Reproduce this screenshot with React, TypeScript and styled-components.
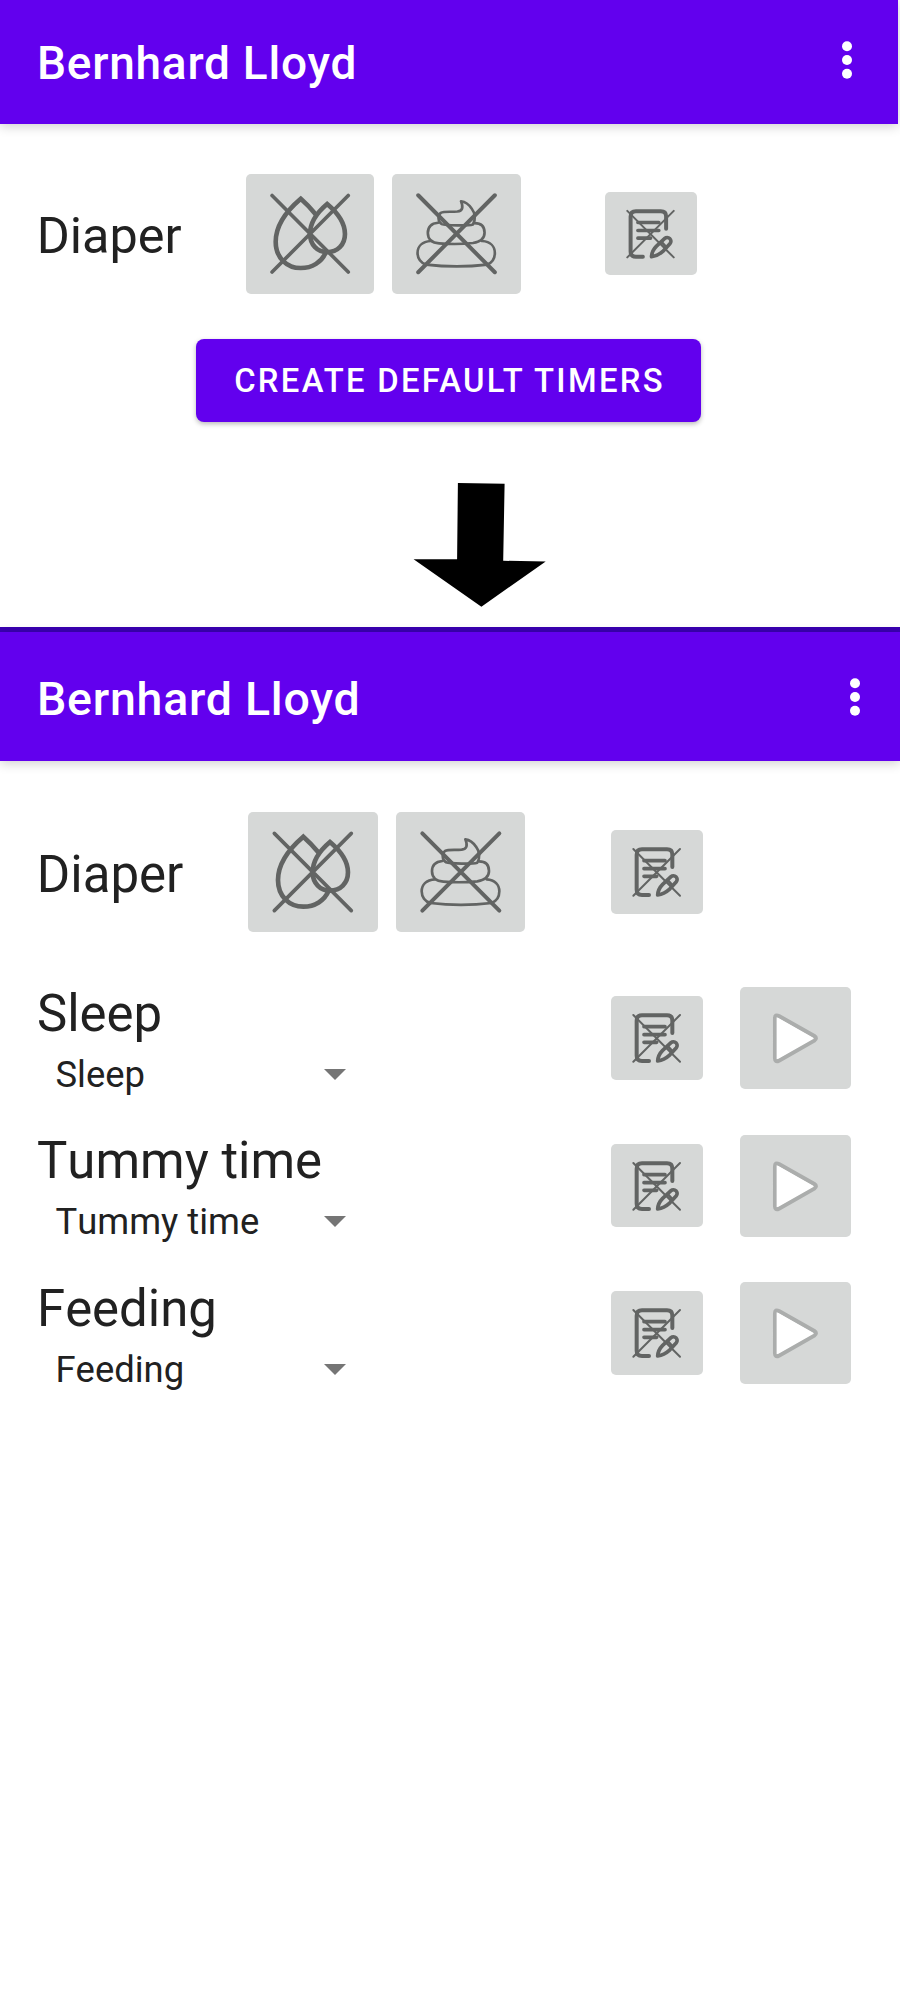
import React from 'react';
import styled, { createGlobalStyle } from 'styled-components';

const GlobalStyle = createGlobalStyle`
  * { box-sizing: border-box; }
  body {
    margin: 0;
    background: #fff;
    font-family: Roboto, 'Liberation Sans', sans-serif;
    color: #212121;
  }
  button { font-family: inherit; border: 0; padding: 0; margin: 0; }
  svg { display: block; }
`;

const Page = styled.main`
  width: 900px;
  height: 2000px;
  overflow: hidden;
`;

const Screen = styled.section<{ $width: number; $height?: number }>`
  width: ${p => p.$width}px;
  height: ${p => (p.$height ? `${p.$height}px` : 'auto')};
`;

const StatusStrip = styled.div`
  height: 5px;
  background: #3a00b2;
`;

const AppBar = styled.header<{ $height: number; $end: number }>`
  display: flex;
  align-items: center;
  justify-content: space-between;
  height: ${p => p.$height}px;
  padding: 0 ${p => p.$end}px 0 37px;
  background: #6200ee;
  box-shadow: 0 2px 11px rgba(0, 0, 0, 0.2);
`;

const Title = styled.h1<{ $size: number; $drop: number }>`
  margin: 0;
  padding-top: ${p => p.$drop}px;
  font-size: ${p => p.$size}px;
  font-weight: 500;
  letter-spacing: 0.75px;
  line-height: 60px;
  white-space: nowrap;
  color: #fff;
`;

const MenuButton = styled.button<{ $lift: number }>`
  width: 12px;
  height: 40px;
  background: none;
  margin-bottom: ${p => p.$lift}px;
`;

const DiaperRow = styled.div<{ $top: number; $height: number }>`
  display: flex;
  align-items: center;
  height: ${p => p.$height}px;
  margin-top: ${p => p.$top}px;
  padding-left: 36px;
`;

const DiaperLabel = styled.div<{ $width: number; $size: number }>`
  width: ${p => p.$width}px;
  padding: 5px 0 0 0.8px;
  font-size: ${p => p.$size}px;
  line-height: 60px;
`;

const Tile = styled.button<{ $w: number; $h: number; $before?: number }>`
  flex: none;
  width: ${p => p.$w}px;
  height: ${p => p.$h}px;
  margin-left: ${p => p.$before ?? 0}px;
  border-radius: 5px;
  background: #d6d8d7;
`;

const CreateButton = styled.button`
  display: block;
  width: 505px;
  height: 82.5px;
  margin: 45.5px 0 0 196px;
  padding: 1px 0 0 2px;
  border-radius: 8px;
  background: #6200ee;
  box-shadow: 0 2px 5px rgba(0, 0, 0, 0.28);
  color: #fff;
  font-size: 32.8px;
  font-weight: 500;
  letter-spacing: 2.3px;
  line-height: 40px;
  white-space: nowrap;
`;

const ArrowBox = styled.div`
  width: 133px;
  margin: 62px 0 0 413px;
`;

const TimerList = styled.div`
  display: flex;
  flex-direction: column;
  gap: 13.6px;
  margin-top: 39px;
`;

const TimerRow = styled.div`
  display: flex;
  align-items: center;
  height: 134px;
  padding-left: 37px;
`;

const TimerInfo = styled.div`
  width: 574px;
  padding-top: 12.4px;
`;

const TimerName = styled.div`
  font-size: 50.9px;
  font-kerning: none;
  line-height: 60px;
`;

const Spinner = styled.div`
  display: flex;
  align-items: center;
  justify-content: space-between;
  width: 308.6px;
  height: 61px;
  padding-left: 18.5px;
  font-size: 36.4px;
  font-kerning: none;
  line-height: 61px;
`;

const INK = '#626463';

const Dots = () => (
  <svg width="12" height="40" viewBox="0 0 12 40" fill="#fff">
    <circle cx="6" cy="6.3" r="5" />
    <circle cx="6" cy="20" r="5" />
    <circle cx="6" cy="33.8" r="5" />
  </svg>
);

const WetIcon = () => (
  <svg width="100%" height="100%" viewBox="25 36 388 360" fill="none" stroke={INK} strokeWidth="14" strokeLinecap="round">
    <path d="M104 100 335 332M335 100 104 332" strokeWidth="11" />
    <path d="M236 157Q214 130 191 110C150 145 115 190 115 240C115 290 150 320 191 320C225 320 255 302 267 272" />
    <path d="M271 126C240 152 219 185 219 217C219 250 242 272 271 272C302 272 325 250 325 217C325 185 302 152 271 126Z" />
  </svg>
);

const SolidIcon = () => (
  <svg width="100%" height="100%" viewBox="18 36 387 360" fill="none" stroke={INK} strokeWidth="8" strokeLinecap="round" strokeLinejoin="round">
    <path d="M97 100 328 332M328 100 97 332" strokeWidth="12" />
    <path d="M226 118Q238 146 215 149C195 151 175 148 165 153C155 160 156 180 168 187C180 192 250 192 262 188C270 175 270 155 258 140C250 128 240 120 226 118Z" />
    <path d="M157 183C135 185 126 198 126 214C126 232 138 244 160 245Q213 249 262 244C285 240 297 230 297 213C297 195 287 184 267 184" />
    <path d="M135 238C108 240 95 255 95 274C95 290 105 305 121 309Q213 320 305 309C320 303 328 290 328 274C328 255 315 240 290 238" />
  </svg>
);

const NotesIcon = () => (
  <svg width="100%" height="100%" viewBox="33 30 276 251" fill="none" stroke={INK} strokeWidth="12" strokeLinecap="round" strokeLinejoin="round">
    <path d="M100 87 240 227M240 87 100 227" strokeWidth="6" />
    <path d="M217 141V104Q217 88 201 88H126Q110 88 110 104V209Q110 225 126 225H147" />
    <path d="M132 122H195M132 146H195M132 169H170" strokeWidth="11" />
    <path d="M173 225Q174 207 188 193L213 170A11 11 0 0 1 229 185L207 209Q193 222 173 225Z" strokeWidth="11" />
    <path d="M203 180 218 197" strokeWidth="8" />
  </svg>
);

const PlayIcon = () => (
  <svg width="100%" height="100%" viewBox="450 51 332 306">
    <path d="M555 145Q555 132 567 138L673 198Q683 205 673 212L567 272Q555 278 555 265Z" fill="#fff" stroke="#abadac" strokeWidth="12" />
    <path d="M560 142 670 205 560 268Z" fill="#fff" />
  </svg>
);

const Caret = () => (
  <svg width="22" height="11" viewBox="0 0 22 11">
    <path d="M0 0H22L11 11Z" fill="#757575" />
  </svg>
);

const timers = ['Sleep', 'Tummy time', 'Feeding'];

export default function App() {
  return (
    <Page>
      <GlobalStyle />
      <Screen $width={898} $height={421}>
        <AppBar $height={124} $end={45}>
          <Title $size={46} $drop={1}>Bernhard Lloyd</Title>
          <MenuButton $lift={4} aria-label="More options"><Dots /></MenuButton>
        </AppBar>
        <DiaperRow $top={50} $height={119.5}>
          <DiaperLabel $width={210} $size={50.4}>Diaper</DiaperLabel>
          <Tile $w={128} $h={119.5} aria-label="Wet"><WetIcon /></Tile>
          <Tile $w={128.4} $h={119.5} $before={18.3} aria-label="Solid"><SolidIcon /></Tile>
          <Tile $w={91.7} $h={83.3} $before={84.6} aria-label="Notes"><NotesIcon /></Tile>
        </DiaperRow>
        <CreateButton>CREATE DEFAULT TIMERS</CreateButton>
      </Screen>
      <ArrowBox>
        <svg width="133" height="144" viewBox="0 0 133 144">
          <path d="M44.9 0 91.6 .8 90.2 77.8 132.7 78.4 68.4 123.7 .6 76.3H44.1Z" />
        </svg>
      </ArrowBox>
      <Screen $width={900}>
        <StatusStrip />
        <AppBar $height={129} $end={39}>
          <Title $size={46.5} $drop={5}>Bernhard Lloyd</Title>
          <MenuButton $lift={0} aria-label="More options"><Dots /></MenuButton>
        </AppBar>
        <DiaperRow $top={51} $height={120}>
          <DiaperLabel $width={212.3} $size={51}>Diaper</DiaperLabel>
          <Tile $w={129.3} $h={120} aria-label="Wet"><WetIcon /></Tile>
          <Tile $w={129} $h={120} $before={18.4} aria-label="Solid"><SolidIcon /></Tile>
          <Tile $w={92} $h={83.7} $before={86} aria-label="Notes"><NotesIcon /></Tile>
        </DiaperRow>
        <TimerList>
          {timers.map(name => (
            <TimerRow key={name}>
              <TimerInfo>
                <TimerName>{name}</TimerName>
                <Spinner>{name}<Caret /></Spinner>
              </TimerInfo>
              <Tile $w={92} $h={83.7} aria-label="Notes"><NotesIcon /></Tile>
              <Tile $w={110.6} $h={102} $before={37} aria-label="Start"><PlayIcon /></Tile>
            </TimerRow>
          ))}
        </TimerList>
      </Screen>
    </Page>
  );
}
